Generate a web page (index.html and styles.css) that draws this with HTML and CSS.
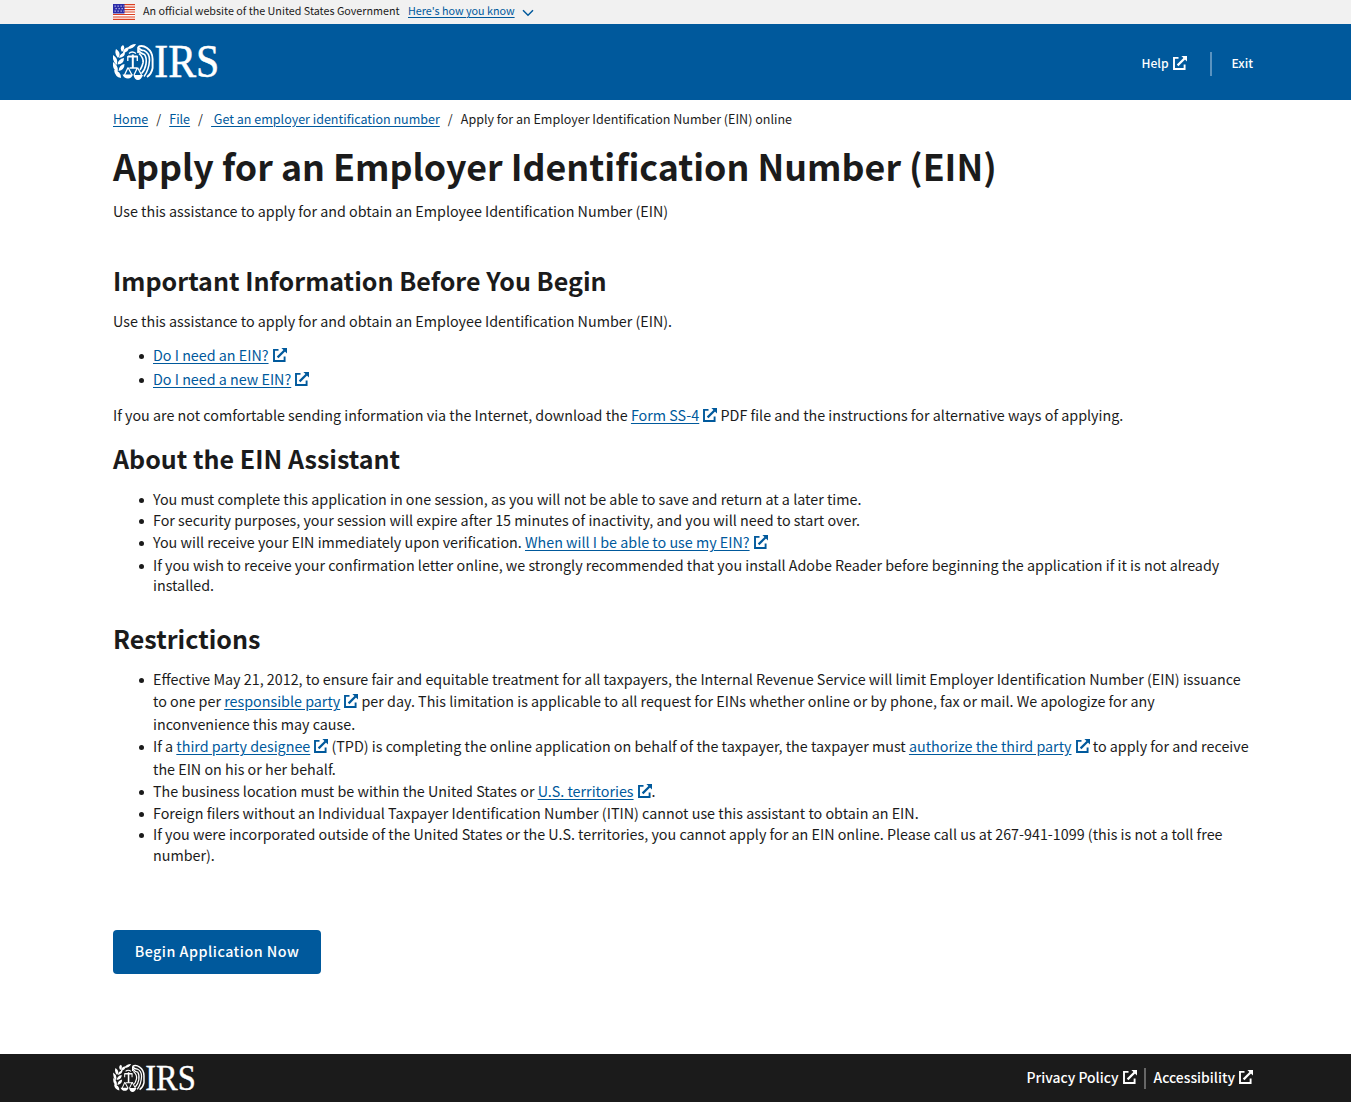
FILE: index.html
```html
<!DOCTYPE html>
<html lang="en">
<head>
<meta charset="utf-8">
<title>Apply for an Employer Identification Number (EIN)</title>
<link rel="stylesheet" href="styles.css">
</head>
<body>
<svg class="defs" aria-hidden="true">
  <symbol id="launch" viewBox="0 0 14 14">
    <path d="M5.500 1.900H1V13H11.600V8.600" fill="none" stroke="currentColor" stroke-width="1.900"/>
    <path d="M4.600 9.400 11.500 2.500" fill="none" stroke="currentColor" stroke-width="2.200"/>
    <path d="M8.400 0H14V5.600Z" fill="currentColor"/>
  </symbol>
  <symbol id="emblem" viewBox="0 0 41 36">
    <path fill="#fff" d="M9 8Q6 3 10 1Q13 4 9 8ZM10 9Q10 4 16 3Q16 8 10 9ZM14 5Q17 0 23 0Q21 5 14 5ZM5 14Q1 10 3 5Q9 9 5 14ZM6 14Q7 9 12 8.500Q12 13 6 14ZM3.500 21Q-1 17 0 11Q6 15 3.500 21ZM4.500 20.500Q5 15 11 14Q11 20 4.500 20.500ZM4.500 28Q-1 25 0 18Q6 22 4.500 28ZM5.500 27Q6 21 11.500 20Q11.500 26 5.500 27ZM8 34Q2 33 1 26Q8 27 8 34Z"/>
    <path fill="none" stroke="#fff" stroke-width="1.900" d="M25 3Q29 .5 34 4Q39.600 8 39.600 15V24Q38.500 30 34 33"/>
    <path fill="none" stroke="#fff" stroke-width="1.600" d="M25 3Q27 6.500 31 6.500Q36.500 9 36.500 16Q36 26 31 32.500M25 6Q28 10 31.500 10.500Q34 14 33 20Q32 26 28.500 29.500M26 9.500Q31 14 30 19Q29 23 27 26M25 3V9"/>
    <path fill="none" stroke="#fff" stroke-width="2" d="M15 12.500H24.500M19.800 10.500V24"/>
    <path fill="none" stroke="#fff" stroke-width="1.300" d="M14.800 12V17M24.300 12V17M16.500 24H24M15 23.500 11.500 31M15 23.500 19 31M24.500 23.500 21 31M24.500 23.500 28.500 31M16 9.500Q19 6.500 23 9.500"/>
    <path fill="#fff" d="M9.500 30.500H20Q18.500 34.500 15 34.500Q11 34.500 9.500 30.500ZM20.500 31H30Q28 36 25 36Q21.500 36 20.500 31Z"/>
  </symbol>
</svg>

<div class="banner">
  <svg class="flag" width="22" height="16" viewBox="0 0 22 16">
    <path fill="#fff" d="M0 0H22V16H0Z"/>
    <path stroke="#db3e1f" stroke-width="1.200" d="M0 .6H22M0 3.100H22M0 5.600H22M0 8H22M0 10.500H22M0 13H22M0 15.400H22"/>
    <path fill="#2b2ba8" d="M0 0H11.500V9.500H0Z"/>
    <path stroke="#bbbbe6" stroke-width="1.200" stroke-dasharray="1.300 1.700" d="M1.500 2.200H11M2.500 4.700H11M1.500 7.200H11"/>
  </svg>
  <span class="banner-text">An official website of the United States Government</span>
  <a class="banner-link">Here's how you know</a>
  <svg class="chevron" width="12" height="8" viewBox="0 0 12 8"><path d="M1 1.300 6 6.300 11 1.300" fill="none" stroke="#00599c" stroke-width="1.500"/></svg>
</div>

<header class="header">
  <svg class="logo" width="105" height="36" viewBox="0 0 105 36">
    <use href="#emblem" width="41" height="36"/>
    <text x="41.300" y="33" class="logo-text" textLength="65" lengthAdjust="spacingAndGlyphs">IRS</text>
  </svg>
  <nav class="header-nav">
    <a class="help">Help<svg class="ext"><use href="#launch"/></svg></a>
    <a class="exit">Exit</a>
  </nav>
</header>

<main class="main">
  <nav class="crumbs">
    <a>Home</a><i>/</i><a>File</a><i>/</i><a>&nbsp;Get an employer identification number</a><i>/</i><span>Apply for an Employer Identification Number (EIN) online</span>
  </nav>
  <h1>Apply for an Employer Identification Number (EIN)</h1>
  <p class="intro">Use this assistance to apply for and obtain an Employee Identification Number (EIN)</p>

  <h2>Important Information Before You Begin</h2>
  <p>Use this assistance to apply for and obtain an Employee Identification Number (EIN).</p>
  <ul class="questions">
    <li><a>Do I need an EIN?</a><svg class="ext"><use href="#launch"/></svg></li>
    <li><a>Do I need a new EIN?</a><svg class="ext"><use href="#launch"/></svg></li>
  </ul>
  <p>If you are not comfortable sending information via the Internet, download the <a>Form SS-4</a><svg class="ext"><use href="#launch"/></svg> PDF file and the instructions for alternative ways of applying.</p>

  <h2 class="about">About the EIN Assistant</h2>
  <ul>
    <li>You must complete this application in one session, as you will not be able to save and return at a later time.</li>
    <li>For security purposes, your session will expire after 15 minutes of inactivity, and you will need to start over.</li>
    <li class="tall">You will receive your EIN immediately upon verification. <a>When will I be able to use my EIN?</a><svg class="ext"><use href="#launch"/></svg></li>
    <li class="tight">If you wish to receive your confirmation letter online, we strongly recommended that you install Adobe Reader before beginning the application if it is not already<br>installed.</li>
  </ul>

  <h2 class="restrictions">Restrictions</h2>
  <ul>
    <li class="linked">Effective May 21, 2012, to ensure fair and equitable treatment for all taxpayers, the Internal Revenue Service will limit Employer Identification Number (EIN) issuance<br>to one per <a>responsible party</a><svg class="ext"><use href="#launch"/></svg> per day. This limitation is applicable to all request for EINs whether online or by phone, fax or mail. We apologize for any<br>inconvenience this may cause.</li>
    <li class="linked">If a <a>third party designee</a><svg class="ext"><use href="#launch"/></svg> (TPD) is completing the online application on behalf of the taxpayer, the taxpayer must <a>authorize the third party</a><svg class="ext"><use href="#launch"/></svg> to apply for and receive<br>the EIN on his or her behalf.</li>
    <li class="linked">The business location must be within the United States or <a>U.S. territories</a><svg class="ext"><use href="#launch"/></svg>.</li>
    <li>Foreign filers without an Individual Taxpayer Identification Number (ITIN) cannot use this assistant to obtain an EIN.</li>
    <li>If you were incorporated outside of the United States or the U.S. territories, you cannot apply for an EIN online. Please call us at 267-941-1099 (this is not a toll free<br>number).</li>
  </ul>
  <button class="begin">Begin Application Now</button>
</main>

<footer class="footer">
  <svg class="logo" width="82" height="28" viewBox="0 0 105 36">
    <use href="#emblem" width="41" height="36"/>
    <text x="41.300" y="33" class="logo-text" textLength="65" lengthAdjust="spacingAndGlyphs">IRS</text>
  </svg>
  <nav class="footer-nav">
    <a>Privacy Policy<svg class="ext"><use href="#launch"/></svg></a>
    <a>Accessibility<svg class="ext"><use href="#launch"/></svg></a>
  </nav>
</footer>
</body>
</html>
```
FILE: styles.css
```css
* { box-sizing: border-box; }
body {
  margin: 0;
  min-height: 1102px;
  display: flex;
  flex-direction: column;
  background: #fff;
  color: #1b1b1b;
  font: 14.323px/21px "Noto Sans CJK SC", sans-serif;
  white-space: nowrap;
}
.defs { display: none; }
a { color: #00599c; text-decoration: underline; text-underline-offset: 2px; }
.ext { width: 14px; height: 14px; margin-left: 4px; vertical-align: -1px; color: #00599c; }

.banner {
  height: 24px;
  padding-left: 113px;
  display: flex;
  align-items: center;
  background: #f1f1f1;
  font-size: 10.75px;
  line-height: 20px;
}
.banner-text { margin: -2px 0 0 8px; width: 265px; }
.banner-link { margin-top: -2px; width: 107px; }
.chevron { margin: 2px 0 0 7px; }

.header {
  height: 76px;
  padding: 0 98px 0 113px;
  display: flex;
  align-items: center;
  justify-content: space-between;
  background: #00599c;
}
.logo { display: block; overflow: visible; }
.logo-text { font: 46px "Liberation Serif", serif; fill: #fff; stroke: #fff; stroke-width: .5px; }
.header-nav { display: flex; align-items: center; font-size: 12.1px; font-weight: 500; margin-top: 4px; }
.header-nav a, .footer-nav a { color: #fff; text-decoration: none; }
.header-nav .ext, .footer-nav .ext { color: #fff; }
.header-nav .ext { vertical-align: -2px; }
.help { padding-right: 23px; line-height: 21px; height: 24px; border-right: 2px solid #5a93c0; }
.exit { padding-left: 20px; line-height: 21px; height: 24px; }

.main { padding: 0 97px 0 113px; flex: 1; }
.crumbs { display: flex; padding-top: 9px; height: 36px; font-size: 12.53px; line-height: 20px; }
.crumbs i { font-style: normal; width: 21px; text-align: center; }
h1 { margin: 0; font-size: 35.78px; line-height: 58px; font-weight: 700; }
h2 { margin: 0; font-size: 25.05px; line-height: 36px; font-weight: 700; }
p { margin: 0; line-height: 24px; }
.intro { margin: 5px 0 39px; }
h2 + p { margin-top: 11px; }
ul { margin: 0; padding-left: 40px; list-style: none; }
li::before {
  content: "";
  display: inline-block;
  width: 5px;
  height: 5px;
  margin: 0 9px 0 -14px;
  vertical-align: 2px;
  border-radius: 50%;
  background: #1b1b1b;
}
.questions { margin: 10px 0 12px; line-height: 24px; }
.about { margin-top: 13px; }
h2 + ul { margin-top: 12px; }
.tall { line-height: 24px; }
.tight { line-height: 20px; padding-top: 1px; }
.linked { line-height: 22.4px; }
.restrictions { margin-top: 25px; }
.begin {
  display: block;
  width: 208px;
  height: 44px;
  margin-top: 65px;
  padding: 0 0 2px;
  border: 0;
  border-radius: 4px;
  background: #00599c;
  color: #fff;
  font: 500 14.3px/42px "Noto Sans CJK SC", sans-serif;
  letter-spacing: .5px;
}

.footer {
  height: 48px;
  padding: 0 98px 0 113px;
  display: flex;
  align-items: center;
  justify-content: space-between;
  background: #1b1b1b;
}
.footer-nav { display: flex; font-size: 13.9px; font-weight: 500; line-height: 19px; }
.footer-nav a { height: 21px; }
.footer-nav a + a { margin-left: 7px; padding-left: 8px; border-left: 2px solid #666; }
```
